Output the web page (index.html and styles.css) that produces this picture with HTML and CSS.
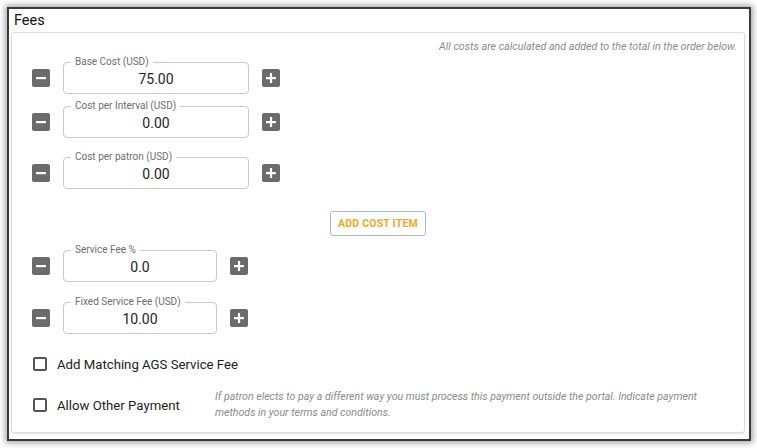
FILE: index.html
```html
<!DOCTYPE html>
<html>
<head>
<meta charset="utf-8">
<link rel="stylesheet" href="styles.css">
</head>
<body>
<div class="panel">
  <div class="title">Fees</div>
  <div class="card">
    <div class="note-top">All costs are calculated and added to the total in the order below.</div>

    <div class="row r1">
      <button class="sq" aria-label="minus"><svg viewBox="0 0 18 18"><rect x="4" y="8" width="10" height="2.2" fill="#fff"/></svg></button>
      <div class="field w186"><span class="lbl">Base Cost (USD)</span><span class="val">75.00</span></div>
      <button class="sq" aria-label="plus"><svg viewBox="0 0 18 18"><rect x="4" y="8" width="10" height="2.2" fill="#fff"/><rect x="7.9" y="4" width="2.2" height="10" fill="#fff"/></svg></button>
    </div>

    <div class="row r2">
      <button class="sq" aria-label="minus"><svg viewBox="0 0 18 18"><rect x="4" y="8" width="10" height="2.2" fill="#fff"/></svg></button>
      <div class="field w186"><span class="lbl">Cost per Interval (USD)</span><span class="val">0.00</span></div>
      <button class="sq" aria-label="plus"><svg viewBox="0 0 18 18"><rect x="4" y="8" width="10" height="2.2" fill="#fff"/><rect x="7.9" y="4" width="2.2" height="10" fill="#fff"/></svg></button>
    </div>

    <div class="row r3">
      <button class="sq" aria-label="minus"><svg viewBox="0 0 18 18"><rect x="4" y="8" width="10" height="2.2" fill="#fff"/></svg></button>
      <div class="field w186"><span class="lbl">Cost per patron (USD)</span><span class="val">0.00</span></div>
      <button class="sq" aria-label="plus"><svg viewBox="0 0 18 18"><rect x="4" y="8" width="10" height="2.2" fill="#fff"/><rect x="7.9" y="4" width="2.2" height="10" fill="#fff"/></svg></button>
    </div>

    <div class="addrow"><button class="add">ADD COST ITEM</button></div>

    <div class="row r4">
      <button class="sq" aria-label="minus"><svg viewBox="0 0 18 18"><rect x="4" y="8" width="10" height="2.2" fill="#fff"/></svg></button>
      <div class="field w154"><span class="lbl">Service Fee %</span><span class="val">0.0</span></div>
      <button class="sq" aria-label="plus"><svg viewBox="0 0 18 18"><rect x="4" y="8" width="10" height="2.2" fill="#fff"/><rect x="7.9" y="4" width="2.2" height="10" fill="#fff"/></svg></button>
    </div>

    <div class="row r5">
      <button class="sq" aria-label="minus"><svg viewBox="0 0 18 18"><rect x="4" y="8" width="10" height="2.2" fill="#fff"/></svg></button>
      <div class="field w154"><span class="lbl">Fixed Service Fee (USD)</span><span class="val">10.00</span></div>
      <button class="sq" aria-label="plus"><svg viewBox="0 0 18 18"><rect x="4" y="8" width="10" height="2.2" fill="#fff"/><rect x="7.9" y="4" width="2.2" height="10" fill="#fff"/></svg></button>
    </div>

    <div class="check c1">
      <span class="box"></span><span class="clbl">Add Matching AGS Service Fee</span>
    </div>
    <div class="check c2">
      <span class="box"></span><span class="clbl wide">Allow Other Payment</span>
      <span class="note">If patron elects to pay a different way you must process this payment outside the portal. Indicate payment methods in your terms and conditions.</span>
    </div>
  </div>
</div>
</body>
</html>
```

FILE: styles.css
```css
* { box-sizing: border-box; }
html, body { margin: 0; padding: 0; background: #fff; }
body {
  font-family: Roboto, "Liberation Sans", sans-serif;
  color: #222;
  width: 757px;
  height: 448px;
  padding: 7px 6px 7px 7px;
}
.panel {
  width: 744px;
  height: 434px;
  border: 2px solid #3a3a3a;
  box-shadow: 0 0 6px 2px rgba(0,0,0,0.35);
  padding: 0 4px 6px 2px;
  display: flex;
  flex-direction: column;
  background: #fff;
}
.title {
  font-size: 14.5px;
  height: 23px;
  line-height: 24px;
  padding-left: 3px;
  color: #111;
}
.card {
  flex: 1;
  border: 1px solid #dcdcdc;
  border-radius: 3px;
  box-shadow: 0 1px 2px rgba(0,0,0,0.12);
  padding: 6px 7px 0 20px;
  display: flex;
  flex-direction: column;
}
.note-top {
  text-align: right;
  font-size: 10.7px;
  font-style: italic;
  color: #8a8a8a;
  line-height: 16px;
}
.row {
  display: flex;
  align-items: center;
  gap: 13px;
  height: 32px;
}
.r1 { margin-top: 7px; }
.r2 { margin-top: 12px; }
.r3 { margin-top: 19px; }
.r4 { margin-top: 14px; }
.r5 { margin-top: 20px; }
.sq {
  width: 18px;
  height: 18px;
  padding: 0;
  border: none;
  border-radius: 2px;
  background: #6b6b6b;
  display: flex;
}
.sq svg { width: 18px; height: 18px; }
.field {
  position: relative;
  height: 32px;
  border: 1px solid #c9c9c9;
  border-radius: 4px;
  display: flex;
  align-items: center;
  justify-content: center;
}
.w186 { width: 186px; }
.w154 { width: 154px; }
.lbl {
  position: absolute;
  left: 7px;
  top: -7px;
  background: #fff;
  padding: 0 4px;
  font-size: 10px;
  line-height: 12px;
  color: #6e6e6e;
}
.val {
  font-size: 14px;
  color: #1e1e1e;
  padding-top: 1px;
}
.addrow {
  display: flex;
  justify-content: center;
  margin-top: 22px;
  padding-right: 13px;
}
.add {
  width: 96px;
  height: 25px;
  border: 1px solid #a9b3e6;
  border-radius: 3px;
  background: #fff;
  color: #f1a81e;
  font-family: Roboto, "Liberation Sans", sans-serif;
  font-weight: 700;
  font-size: 10.5px;
  letter-spacing: 0.2px;
  padding: 0;
}
.check {
  display: flex;
  align-items: center;
  margin-left: 1px;
}
.c1 { margin-top: 22px; height: 16px; }
.c2 { margin-top: 17px; }
.box {
  width: 14px;
  height: 14px;
  border: 2px solid #555;
  border-radius: 2px;
  flex: none;
}
.clbl {
  font-size: 13.2px;
  color: #222;
  margin-left: 10px;
}
.clbl.wide { width: 158px; flex: none; }
.note {
  font-size: 10.6px;
  font-style: italic;
  color: #8a8a8a;
  line-height: 16px;
  width: 500px;
}
```
